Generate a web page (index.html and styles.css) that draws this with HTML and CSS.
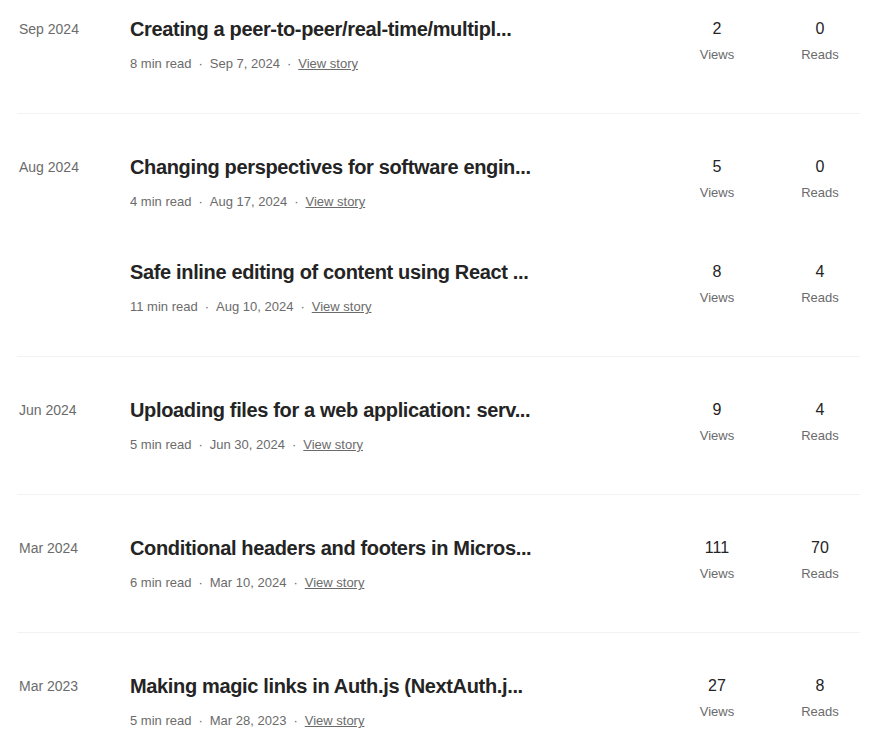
FILE: index.html
```html
<!DOCTYPE html>
<html>
<head>
<meta charset="utf-8">
<link rel="stylesheet" href="styles.css">
</head>
<body>
<div class="list">
  <section class="group first">
    <div class="month">Sep 2024</div>
    <div class="items">
      <div class="item">
        <div class="info">
          <div class="title">Creating a peer-to-peer/real-time/multipl...</div>
          <div class="meta"><span>8 min read</span><span class="dot">·</span><span>Sep 7, 2024</span><span class="dot">·</span><a class="link">View story</a></div>
        </div>
        <div class="stats">
          <div class="stat"><div class="num">2</div><div class="label">Views</div></div>
          <div class="stat"><div class="num">0</div><div class="label">Reads</div></div>
        </div>
      </div>
    </div>
  </section>
  <section class="group">
    <div class="month">Aug 2024</div>
    <div class="items">
      <div class="item">
        <div class="info">
          <div class="title">Changing perspectives for software engin...</div>
          <div class="meta"><span>4 min read</span><span class="dot">·</span><span>Aug 17, 2024</span><span class="dot">·</span><a class="link">View story</a></div>
        </div>
        <div class="stats">
          <div class="stat"><div class="num">5</div><div class="label">Views</div></div>
          <div class="stat"><div class="num">0</div><div class="label">Reads</div></div>
        </div>
      </div>
      <div class="item">
        <div class="info">
          <div class="title">Safe inline editing of content using React ...</div>
          <div class="meta"><span>11 min read</span><span class="dot">·</span><span>Aug 10, 2024</span><span class="dot">·</span><a class="link">View story</a></div>
        </div>
        <div class="stats">
          <div class="stat"><div class="num">8</div><div class="label">Views</div></div>
          <div class="stat"><div class="num">4</div><div class="label">Reads</div></div>
        </div>
      </div>
    </div>
  </section>
  <section class="group">
    <div class="month">Jun 2024</div>
    <div class="items">
      <div class="item">
        <div class="info">
          <div class="title">Uploading files for a web application: serv...</div>
          <div class="meta"><span>5 min read</span><span class="dot">·</span><span>Jun 30, 2024</span><span class="dot">·</span><a class="link">View story</a></div>
        </div>
        <div class="stats">
          <div class="stat"><div class="num">9</div><div class="label">Views</div></div>
          <div class="stat"><div class="num">4</div><div class="label">Reads</div></div>
        </div>
      </div>
    </div>
  </section>
  <section class="group">
    <div class="month">Mar 2024</div>
    <div class="items">
      <div class="item">
        <div class="info">
          <div class="title">Conditional headers and footers in Micros...</div>
          <div class="meta"><span>6 min read</span><span class="dot">·</span><span>Mar 10, 2024</span><span class="dot">·</span><a class="link">View story</a></div>
        </div>
        <div class="stats">
          <div class="stat"><div class="num">111</div><div class="label">Views</div></div>
          <div class="stat"><div class="num">70</div><div class="label">Reads</div></div>
        </div>
      </div>
    </div>
  </section>
  <section class="group">
    <div class="month">Mar 2023</div>
    <div class="items">
      <div class="item">
        <div class="info">
          <div class="title">Making magic links in Auth.js (NextAuth.j...</div>
          <div class="meta"><span>5 min read</span><span class="dot">·</span><span>Mar 28, 2023</span><span class="dot">·</span><a class="link">View story</a></div>
        </div>
        <div class="stats">
          <div class="stat"><div class="num">27</div><div class="label">Views</div></div>
          <div class="stat"><div class="num">8</div><div class="label">Reads</div></div>
        </div>
      </div>
    </div>
  </section>
</div>
</body>
</html>
```
FILE: styles.css
```css
html, body {
  margin: 0;
  padding: 0;
  background: #fff;
}
body {
  font-family: "Liberation Sans", Arial, sans-serif;
  color: #242424;
  overflow: hidden;
}
.list {
  width: 843px;
  margin-left: 17px;
}
.group {
  display: flex;
  padding: 41px 0 39px;
  border-bottom: 1px solid #f2f2f2;
}
.group.first {
  padding-top: 17px;
}
.month {
  width: 111px;
  flex: none;
  padding-left: 2px;
  box-sizing: border-box;
  font-size: 14px;
  line-height: 24px;
  color: #6b6b6b;
}
.items {
  flex: 1;
  display: flex;
  flex-direction: column;
  gap: 48px;
}
.item {
  display: flex;
  align-items: flex-start;
}
.info {
  width: 420px;
  flex: none;
  padding-left: 2px;
}
.title {
  font-size: 20px;
  font-weight: 700;
  line-height: 24px;
  letter-spacing: -0.35px;
  white-space: nowrap;
  overflow: hidden;
  color: #242424;
}
.meta {
  margin-top: 13px;
  font-size: 13px;
  line-height: 20px;
  color: #6b6b6b;
  white-space: nowrap;
}
.dot {
  margin: 0 7px;
}
.link {
  color: #6b6b6b;
  text-decoration: underline;
}
.stats {
  margin-left: auto;
  display: flex;
  gap: 23px;
}
.stat {
  width: 80px;
  text-align: center;
}
.num {
  font-size: 16px;
  line-height: 24px;
  color: #242424;
}
.label {
  margin-top: 4px;
  font-size: 13px;
  line-height: 20px;
  color: #6b6b6b;
}
```
